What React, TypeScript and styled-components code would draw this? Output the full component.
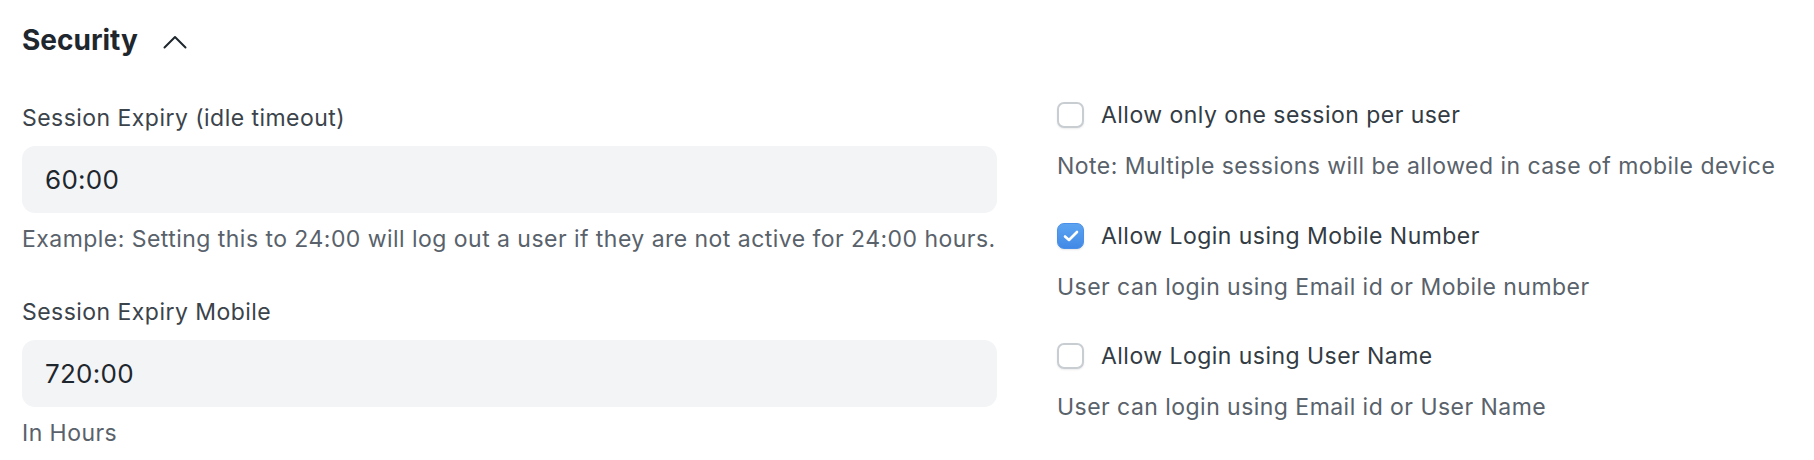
import React from "react";
import styled, { createGlobalStyle } from "styled-components";

const GlobalStyle = createGlobalStyle`
  html, body {
    margin: 0;
    padding: 0;
    background: #ffffff;
  }
  body {
    font-family: Inter, "Noto Sans", "Liberation Sans", sans-serif;
    -webkit-font-smoothing: antialiased;
  }
  * { box-sizing: border-box; }
`;

const Page = styled.div`
  width: 1814px;
  height: 460px;
  overflow: hidden;
  padding: 21px 0 0 22px;
`;

const SectionHead = styled.div`
  display: flex;
  align-items: center;
  height: 36px;
`;

const SectionTitle = styled.h2`
  margin: 0;
  font-size: 28px;
  line-height: 36px;
  font-weight: 650;
  color: #1f272e;
  letter-spacing: 0;
  padding-top: 1px;
`;

const Chevron = styled.svg`
  margin-left: 25px;
  margin-top: 6px;
  flex: none;
`;

const Columns = styled.div`
  display: grid;
  grid-template-columns: 975px 975px;
  column-gap: 60px;
  margin-top: 43px;
`;

const Column = styled.div`
  display: flex;
  flex-direction: column;
`;

const Field = styled.div`
  display: flex;
  flex-direction: column;
  & + & {
    margin-top: 40px;
  }
`;

const Label = styled.label`
  font-size: 23px;
  line-height: 36px;
  letter-spacing: 0.02em;
  color: #3b434b;
`;

const Input = styled.input`
  margin-top: 10px;
  height: 67px;
  width: 100%;
  border: none;
  outline: none;
  border-radius: 13px;
  background: #f3f4f6;
  padding: 0 23px;
  font-family: inherit;
  font-size: 26px;
  letter-spacing: 0.01em;
  color: #1f272e;
`;

const Description = styled.div<{ $gap?: number }>`
  margin-top: ${(p) => p.$gap ?? 11}px;
  font-size: 23px;
  line-height: 30px;
  letter-spacing: 0.02em;
  color: #59626b;
  white-space: nowrap;
`;

const CheckItem = styled.div`
  display: flex;
  flex-direction: column;
  & + & {
    margin-top: 39.5px;
  }
`;

const CheckRow = styled.label`
  display: flex;
  align-items: center;
  height: 30px;
  font-size: 23px;
  line-height: 30px;
  letter-spacing: 0.02em;
  color: #333c44;
`;

const Box = styled.span<{ $checked?: boolean }>`
  flex: none;
  width: 27px;
  height: 26px;
  margin-right: 17px;
  border-radius: 7px;
  display: flex;
  align-items: center;
  justify-content: center;
  ${(p) =>
    p.$checked
      ? `
    background: linear-gradient(180deg, #5ca4f1 0%, #4289e6 100%);
    border: 1px solid #4a8fe8;
    box-shadow: 0 1px 2px rgba(0, 0, 0, 0.1);
  `
      : `
    background: #ffffff;
    border: 2px solid #c8cdd2;
    box-shadow: 0 1px 2px rgba(0, 0, 0, 0.08);
  `}
`;

const fields = [
  {
    label: "Session Expiry (idle timeout)",
    value: "60:00",
    description:
      "Example: Setting this to 24:00 will log out a user if they are not active for 24:00 hours.",
  },
  {
    label: "Session Expiry Mobile",
    value: "720:00",
    description: "In Hours",
  },
];

const checks = [
  {
    label: "Allow only one session per user",
    checked: false,
    description: "Note: Multiple sessions will be allowed in case of mobile device",
  },
  {
    label: "Allow Login using Mobile Number",
    checked: true,
    description: "User can login using Email id or Mobile number",
  },
  {
    label: "Allow Login using User Name",
    checked: false,
    description: "User can login using Email id or User Name",
  },
];

export default function App() {
  return (
    <>
      <GlobalStyle />
      <Page>
        <SectionHead>
          <SectionTitle>Security</SectionTitle>
          <Chevron width="24" height="14" viewBox="0 0 24 14" fill="none">
            <polyline
              points="1.5,12.5 12,2 22.5,12.5"
              stroke="#1f272e"
              strokeWidth="2"
              strokeLinecap="round"
              strokeLinejoin="round"
            />
          </Chevron>
        </SectionHead>
        <Columns>
          <Column>
            {fields.map((f) => (
              <Field key={f.label}>
                <Label>{f.label}</Label>
                <Input type="text" defaultValue={f.value} readOnly />
                <Description>{f.description}</Description>
              </Field>
            ))}
          </Column>
          <Column>
            {checks.map((c) => (
              <CheckItem key={c.label}>
                <CheckRow>
                  <Box $checked={c.checked}>
                    {c.checked && (
                      <svg width="16" height="12" viewBox="0 0 16 12" fill="none">
                        <polyline
                          points="2,6.5 6,10 14,2"
                          stroke="#ffffff"
                          strokeWidth="2.6"
                          strokeLinecap="round"
                          strokeLinejoin="round"
                        />
                      </svg>
                    )}
                  </Box>
                  {c.label}
                </CheckRow>
                <Description $gap={21}>{c.description}</Description>
              </CheckItem>
            ))}
          </Column>
        </Columns>
      </Page>
    </>
  );
}
